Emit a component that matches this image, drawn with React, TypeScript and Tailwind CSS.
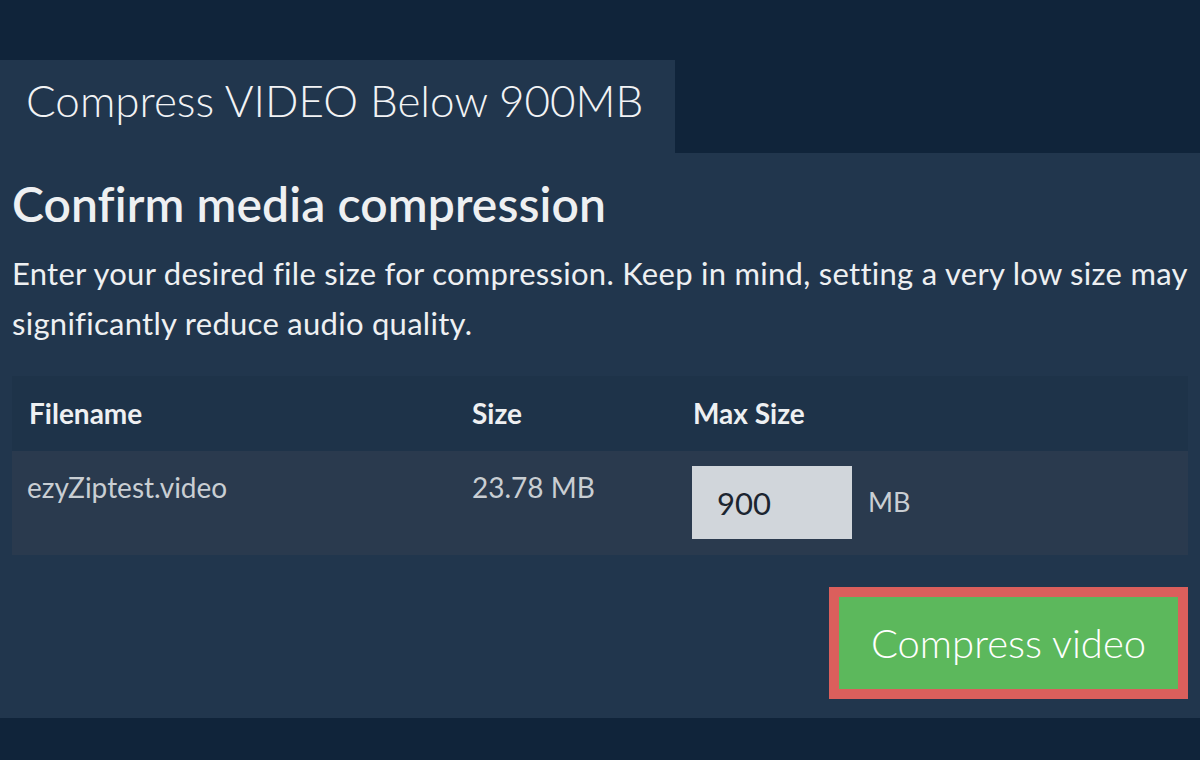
import { useState } from "react";

export default function App() {
    const [maxSize, setMaxSize] = useState("900");

    return (
        <div
            className="min-h-[760px] w-full bg-[#10243a] pt-[60px] text-[#eef0f2]"
            style={{ fontFamily: "Lato, 'Noto Sans', sans-serif" }}
        >
            <div className="flex">
                <div className="flex h-[93px] w-[675px] items-center bg-[#21364d] pb-[12px] pl-[26px]">
                    <span className="text-[44px] font-light leading-[1.2] text-[#f2f3f5]">
                        Compress VIDEO Below 900MB
                    </span>
                </div>
            </div>

            <div className="bg-[#21364d] px-[12px] pt-[23px] pb-[19px]">
                <h1 className="text-[48px] font-semibold leading-[56px] tracking-[0.1px] text-[#eef0f2]">
                    Confirm media compression
                </h1>
                <p className="mt-[16px] text-[31px] leading-[50px] tracking-[0.28px] text-[#eef0f2]">
                    Enter your desired file size for compression. Keep in mind,
                    setting a very low size may significantly reduce audio
                    quality.
                </p>

                <div className="mt-[28px]">
                    <div className="flex h-[75px] items-center bg-[#1e3349] text-[28px] font-bold leading-[1.2] text-[#eef0f2]">
                        <div className="w-[443px] pl-[17px]">Filename</div>
                        <div className="w-[221px] pl-[17px]">Size</div>
                        <div className="flex-1 pl-[17px]">Max Size</div>
                    </div>
                    <div className="flex h-[104px] items-start bg-[#2a3a4e] pt-[15px] text-[28px] leading-[34px] text-[#c9ced3]">
                        <div className="w-[443px] pt-[4px] pl-[15px]">
                            ezyZiptest.video
                        </div>
                        <div className="w-[221px] pt-[4px] pl-[17px]">
                            23.78 MB
                        </div>
                        <div className="flex flex-1 items-center pl-[16px]">
                            <input
                                value={maxSize}
                                onChange={(e) => setMaxSize(e.target.value)}
                                className="h-[73px] w-[160px] bg-[#d1d6db] pl-[25px] text-[31px] text-[#1b2530] outline-none"
                            />
                            <span className="ml-[16px] text-[27px] leading-[1.2] text-[#c9ced3]">
                                MB
                            </span>
                        </div>
                    </div>
                </div>

                <div className="mt-[32px] flex justify-end">
                    <button
                        type="button"
                        className="h-[112px] w-[359px] border-[10px] border-[#db5f5c] bg-[#5cb85c] text-[40px] font-light text-white"
                    >
                        Compress video
                    </button>
                </div>
            </div>
        </div>
    );
}
